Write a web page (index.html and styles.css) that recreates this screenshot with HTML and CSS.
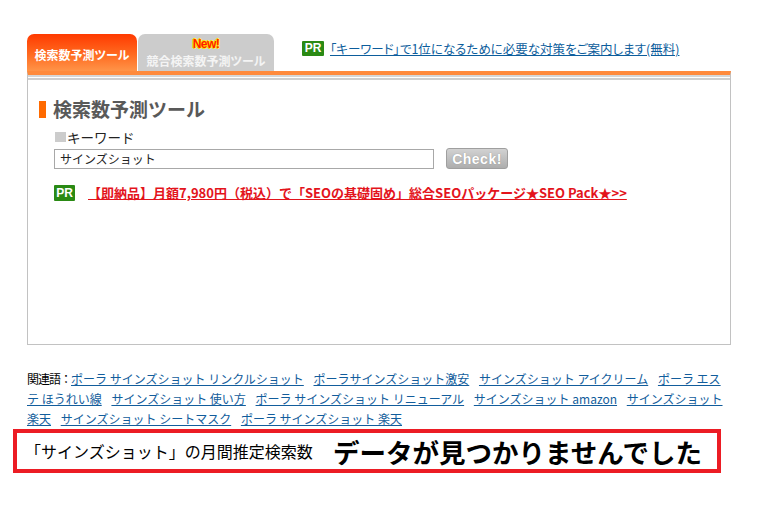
FILE: index.html
```html
<!DOCTYPE html>
<html lang="ja">
<head>
<meta charset="utf-8">
<title>検索数予測ツール</title>
<link rel="stylesheet" href="styles.css">
</head>
<body>
<div class="page">
  <div class="tabs">
    <div class="tab tab-active">検索数予測ツール</div>
    <div class="tab tab-gray"><span class="new">New!</span><span class="tab-label">競合検索数予測ツール</span></div>
    <div class="top-pr"><span class="pr pr-small">PR</span><a href="#" class="pr-link">「キーワード」で1位になるために必要な対策をご案内します(無料)</a></div>
  </div>
  <div class="panel">
    <div class="panel-lines"></div>
    <div class="panel-body">
      <h2 class="heading"><span class="marker"></span>検索数予測ツール</h2>
      <div class="label"><span class="sq"></span>キーワード</div>
      <div class="form">
        <input class="kw" type="text" value="サインズショット">
        <button class="check" type="button">Check!</button>
      </div>
      <div class="ad"><span class="pr">PR</span><a href="#" class="ad-link">【即納品】月額7,980円（税込）で「SEOの基礎固め」総合SEOパッケージ★SEO Pack★&gt;&gt;</a></div>
    </div>
  </div>
  <div class="related"><span class="related-label">関連語：</span><a href="#">ポーラ サインズショット リンクルショット</a> <a href="#">ポーラサインズショット激安</a> <a href="#">サインズショット アイクリーム</a> <a href="#">ポーラ エステ ほうれい線</a> <a href="#">サインズショット 使い方</a> <a href="#">ポーラ サインズショット リニューアル</a> <a href="#">サインズショット amazon</a> <a href="#">サインズショット 楽天</a> <a href="#">サインズショット シートマスク</a> <a href="#">ポーラ サインズショット 楽天</a></div>
</div>
<div class="result">
  <span class="result-label">「サインズショット」の月間推定検索数</span>
  <span class="result-value">データが見つかりませんでした</span>
</div>
</body>
</html>
```
FILE: styles.css
```css
html, body {
  margin: 0;
  padding: 0;
  background: #ffffff;
}
body {
  font-family: "Noto Sans CJK JP", "Liberation Sans", sans-serif;
  color: #000;
  font-size: 13px;
}
.page {
  margin: 34px 0 0 27px;
  width: 704px;
}
.tabs {
  display: flex;
  align-items: flex-start;
  height: 37px;
}
.tab {
  height: 37px;
  box-sizing: border-box;
  border-radius: 7px 7px 0 0;
  font-weight: bold;
  font-size: 12px;
  text-align: center;
  font-feature-settings: "palt";
}
.tab-active {
  width: 110px;
  padding-top: 13px;
  line-height: 16px;
  color: #fff;
  background: linear-gradient(#ff3a00, #ff6a20 55%, #ff9448);
}
.tab-gray {
  width: 136px;
  margin-left: 1px;
  padding-top: 4px;
  background: #cccccc;
  color: #f4f4f4;
  display: flex;
  flex-direction: column;
  align-items: center;
}
.new {
  font-family: "Liberation Sans", sans-serif;
  font-size: 12px;
  line-height: 13px;
  color: #ff1a00;
  letter-spacing: -0.5px;
  text-shadow: 1px 0 #ffe600, -1px 0 #ffe600, 0 1px #ffe600, 0 -1px #ffe600;
}
.tab-label {
  line-height: 16px;
  margin-top: 2px;
}
.top-pr {
  margin-left: 28px;
  margin-top: 5px;
  display: flex;
  align-items: center;
}
.pr {
  display: inline-block;
  background: #2a8a14;
  color: #fff;
  font-family: "Liberation Sans", sans-serif;
  font-weight: bold;
  font-size: 12px;
  width: 21px;
  height: 16px;
  line-height: 16px;
  text-align: center;
  border-radius: 1px;
}
.pr-small {
  width: 22px;
  height: 15px;
  line-height: 15px;
}
.pr-link {
  margin-left: 6px;
  color: #0c5d9c;
  font-size: 12.5px;
  font-feature-settings: "palt";
}
.panel {
  border-top: 4px solid #ff8a3c;
  border-left: 1px solid #c2c2c2;
  border-right: 1px solid #c2c2c2;
  border-bottom: 1px solid #c2c2c2;
  height: 269px;
}
.panel-lines {
  height: 1px;
  border-top: 2px solid #d6d6d6;
  border-bottom: 2px solid #cfcfcf;
}
.panel-body {
  padding: 18px 0 0 11px;
}
.heading {
  margin: 0;
  display: flex;
  align-items: center;
  font-size: 19px;
  line-height: 22px;
  color: #595959;
  font-weight: bold;
}
.marker {
  width: 7px;
  height: 17px;
  background: #ff6a00;
  margin-right: 7px;
}
.label {
  margin: 9px 0 0 16px;
  display: flex;
  align-items: center;
  font-size: 13.5px;
  line-height: 16px;
  color: #222;
}
.sq {
  width: 11px;
  height: 10px;
  background: #cccccc;
  margin-right: 1px;
}
.form {
  display: flex;
  align-items: center;
  margin: 3px 0 0 15px;
}
.kw {
  width: 380px;
  height: 20px;
  box-sizing: border-box;
  border: 1px solid #a8a8a8;
  padding: 0 5px;
  font-family: "Noto Sans CJK JP", sans-serif;
  font-size: 12px;
  color: #222;
  outline: none;
}
.check {
  margin-left: 12px;
  width: 62px;
  height: 21px;
  padding: 0;
  border: 1px solid #9f9f9f;
  border-radius: 3px;
  background: linear-gradient(#d2d2d2, #adadad);
  color: #fff;
  font-family: "Liberation Sans", sans-serif;
  font-weight: bold;
  font-size: 14px;
  letter-spacing: 0.5px;
  text-shadow: 0 0 1px #888;
}
.ad {
  display: flex;
  align-items: center;
  margin: 14px 0 0 15px;
}
.ad-link {
  margin-left: 13px;
  color: #e3141c;
  font-weight: bold;
  font-size: 13px;
}
.related {
  margin-top: 24px;
  font-size: 12px;
  line-height: 20px;
}
.related-label {
  letter-spacing: -1px;
}
.related a {
  color: #125d9c;
  margin-right: 7px;
}
.result {
  margin: 0 0 0 13px;
  width: 708px;
  height: 44px;
  box-sizing: border-box;
  border: 4px solid #ec1c24;
  display: flex;
  align-items: center;
  padding-left: 8px;
}
.result-label {
  font-size: 16px;
  width: 308px;
  flex: none;
}
.result-value {
  font-size: 26.5px;
  font-weight: bold;
  white-space: nowrap;
}
```
